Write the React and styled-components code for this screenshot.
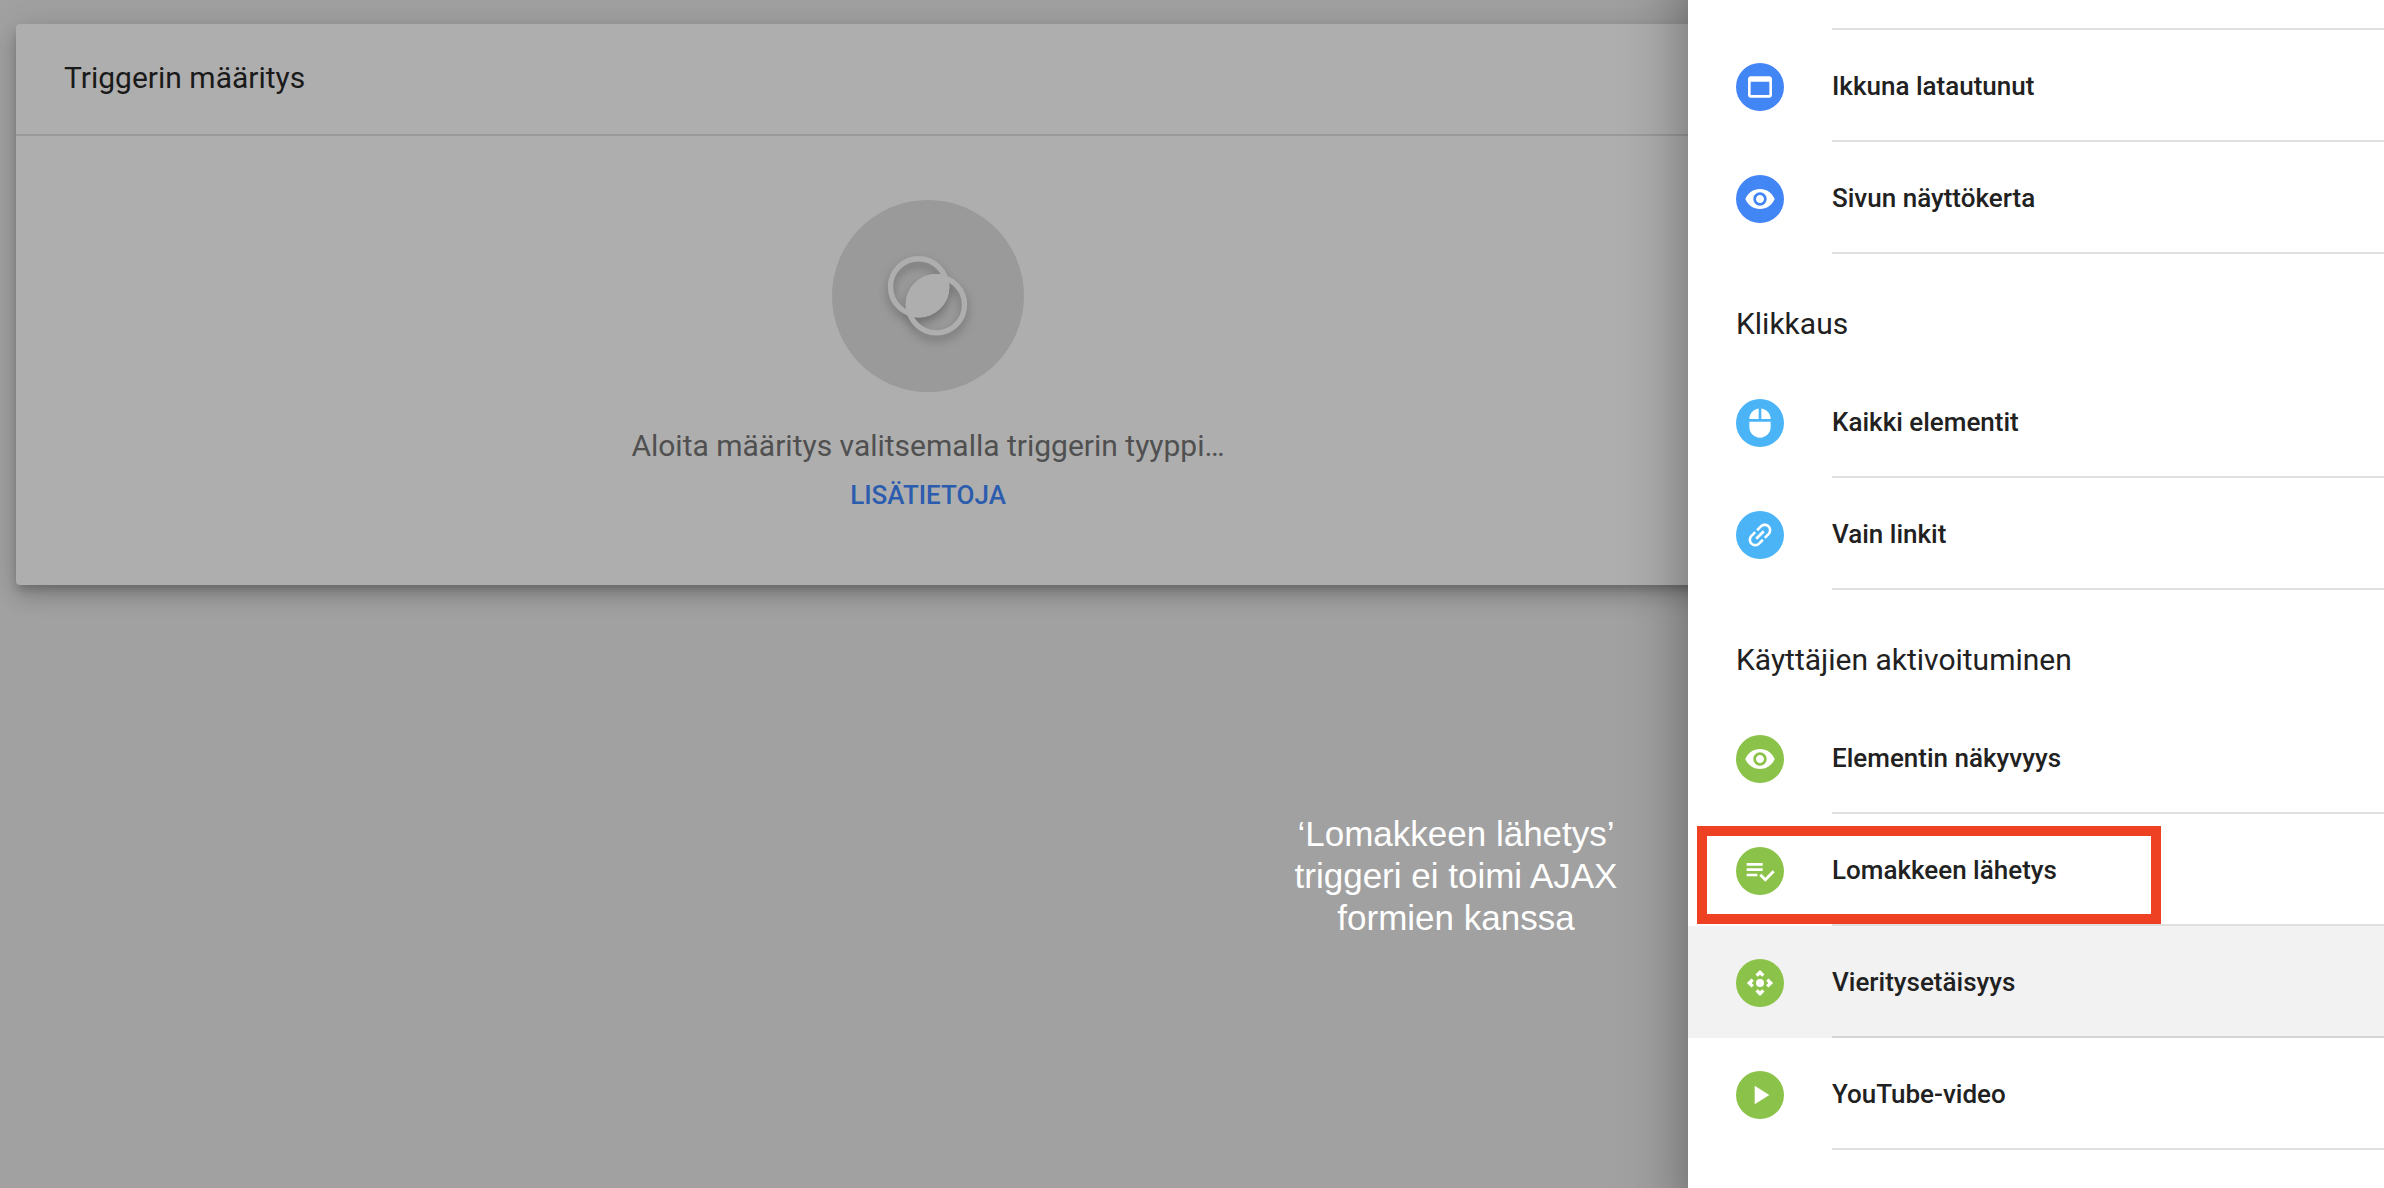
import React from "react";
import styled, { createGlobalStyle } from "styled-components";

const GlobalStyle = createGlobalStyle`
  *, *::before, *::after { box-sizing: border-box; }
  body {
    margin: 0;
    background: #a1a1a1;
    font-family: Roboto, "Noto Sans", sans-serif;
    color: #212121;
  }
`;

const Page = styled.div`
  position: relative;
  min-height: 100vh;
  padding: 24px 544px 0 16px;
  overflow: hidden;
`;

const Card = styled.main`
  background: #aeaeae;
  border-radius: 4px;
  box-shadow:
    0 12px 20px rgba(0, 0, 0, 0.14),
    0 2px 36px rgba(0, 0, 0, 0.12),
    0 6px 10px -2px rgba(0, 0, 0, 0.2);
`;

const CardHeader = styled.header`
  display: flex;
  align-items: center;
  height: 112px;
  padding: 0 48px 2px;
  border-bottom: 2px solid #9a9a9a;
`;

const CardTitle = styled.h1`
  margin: 0;
  font-size: 30px;
  font-weight: 400;
  line-height: 40px;
  color: #1a1a1a;
`;

const CardBody = styled.div`
  display: flex;
  flex-direction: column;
  align-items: center;
  padding: 64px 48px 70px;
`;

const Emblem = styled.div`
  display: flex;
  align-items: center;
  justify-content: center;
  width: 192px;
  height: 192px;
  margin-bottom: 32px;
  border-radius: 50%;
  background: #9a9a9a;
`;

const EmblemIcon = styled.svg`
  width: 96px;
  height: 96px;
  overflow: visible;
  filter: drop-shadow(0 5px 5px rgba(0, 0, 0, 0.28));
`;

const Prompt = styled.p`
  margin: 0 0 7px;
  font-size: 30px;
  line-height: 44px;
  color: #505050;
`;

const MoreLink = styled.a`
  font-size: 26px;
  font-weight: 500;
  line-height: 40px;
  color: #2c5cae;
  text-decoration: none;
  text-transform: uppercase;
`;

const Drawer = styled.aside`
  position: absolute;
  top: 0;
  right: 0;
  bottom: 0;
  width: 696px;
  padding-top: 28px;
  background: #fff;
  box-shadow: 40px 0 60px 40px rgba(0, 0, 0, 0.4);
`;

const Divider = styled.hr`
  height: 2px;
  margin: 0 0 0 144px;
  border: 0;
  background: rgba(0, 0, 0, 0.12);
`;

const GroupTitle = styled.h2`
  display: flex;
  align-items: center;
  height: 112px;
  margin: 0;
  padding: 28px 48px 0;
  font-size: 30px;
  font-weight: 400;
  line-height: 40px;
`;

const List = styled.ul`
  margin: 0;
  padding: 0;
  list-style: none;
`;

const Item = styled.li`
  position: relative;
  background: ${(p) => (p.$hovered ? "#f2f2f2" : "transparent")};
`;

const ItemButton = styled.button`
  display: flex;
  align-items: center;
  gap: 48px;
  width: 100%;
  height: 110px;
  padding: 4px 48px 0;
  border: 0;
  background: none;
  font: 500 26px/36px Roboto, "Noto Sans", sans-serif;
  color: #212121;
  text-align: left;
  cursor: pointer;
`;

const ItemLabel = styled.span`
  padding-bottom: 2px;
`;

const Badge = styled.span`
  display: flex;
  align-items: center;
  justify-content: center;
  width: 48px;
  height: 48px;
  border-radius: 50%;
  background: ${(p) => p.$color};
`;

const Glyph = styled.svg`
  width: 32px;
  height: 32px;
  fill: #fff;
`;

const Highlight = styled.div`
  position: absolute;
  top: 12px;
  left: 9px;
  width: 464px;
  height: 98px;
  border: 10px solid #ee4023;
  pointer-events: none;
`;

const Note = styled.p`
  position: absolute;
  top: 813px;
  right: 748px;
  width: 360px;
  margin: 0;
  font: 400 35px/42px "Liberation Sans", Arial, sans-serif;
  color: #fff;
  text-align: center;
`;

const icons = {
  window: (
    <path d="M19 4H5c-1.11 0-2 .9-2 2v12c0 1.1.89 2 2 2h14c1.1 0 2-.9 2-2V6c0-1.1-.89-2-2-2zm0 14H5V8h14v10z" />
  ),
  eye: (
    <path d="M12 4.5C7 4.5 2.73 7.61 1 12c1.73 4.39 6 7.5 11 7.5s9.27-3.11 11-7.5c-1.73-4.39-6-7.5-11-7.5zM12 17c-2.76 0-5-2.24-5-5s2.24-5 5-5 5 2.24 5 5-2.24 5-5 5zm0-8c-1.66 0-3 1.34-3 3s1.34 3 3 3 3-1.34 3-3-1.34-3-3-3z" />
  ),
  mouse: (
    <path d="M13 1.07V9h7c0-4.08-3.05-7.44-7-7.93zM4 15c0 4.42 3.58 8 8 8s8-3.58 8-8v-4H4v4zm7-13.93C7.05 1.56 4 4.92 4 9h7V1.07z" />
  ),
  link: (
    <path
      transform="rotate(-45 12 12)"
      d="M3.9 12c0-1.71 1.39-3.1 3.1-3.1h4V7H7c-2.76 0-5 2.24-5 5s2.24 5 5 5h4v-1.9H7c-1.71 0-3.1-1.39-3.1-3.1zM8 13h8v-2H8v2zm9-6h-4v1.9h4c1.71 0 3.1 1.39 3.1 3.1s-1.39 3.1-3.1 3.1h-4V17h4c2.76 0 5-2.24 5-5s-2.24-5-5-5z"
    />
  ),
  form: (
    <path d="M14 10H2v2h12v-2zm0-4H2v2h12V6zM2 16h8v-2H2v2zm19.5-4.5L23 13l-6.99 7-4.51-4.5L13 14l3.01 3 5.49-5.5z" />
  ),
  scroll: (
    <>
      {[0, 90, 180, 270].map((angle) => (
        <path
          key={angle}
          transform={`rotate(${angle} 12 12)`}
          d="M12 2.2l3.4 3.4-1.8 1.8L12 5.8l-1.6 1.6-1.8-1.8z"
        />
      ))}
      <circle cx="12" cy="12" r="3" />
    </>
  ),
  play: <path d="M8 5v14l11-7z" />,
};

const BLUE = "#4285f4";
const SKY = "#4ab4f6";
const GREEN = "#8bc34a";

const groups = [
  {
    color: BLUE,
    items: [
      { icon: "window", label: "Ikkuna latautunut" },
      { icon: "eye", label: "Sivun näyttökerta" },
    ],
  },
  {
    title: "Klikkaus",
    color: SKY,
    items: [
      { icon: "mouse", label: "Kaikki elementit" },
      { icon: "link", label: "Vain linkit" },
    ],
  },
  {
    title: "Käyttäjien aktivoituminen",
    color: GREEN,
    items: [
      { icon: "eye", label: "Elementin näkyvyys" },
      { icon: "form", label: "Lomakkeen lähetys", highlighted: true },
      { icon: "scroll", label: "Vieritysetäisyys", hovered: true },
      { icon: "play", label: "YouTube-video" },
    ],
  },
];

function TriggerItem({ icon, label, color, highlighted, hovered }) {
  return (
    <Item $hovered={hovered}>
      <ItemButton type="button">
        <Badge $color={color}>
          <Glyph viewBox="0 0 24 24" aria-hidden="true">
            {icons[icon]}
          </Glyph>
        </Badge>
        <ItemLabel>{label}</ItemLabel>
      </ItemButton>
      <Divider />
      {highlighted && <Highlight />}
    </Item>
  );
}

export default function App() {
  return (
    <>
      <GlobalStyle />
      <Page>
        <Card>
          <CardHeader>
            <CardTitle>Triggerin määritys</CardTitle>
          </CardHeader>
          <CardBody>
            <Emblem>
              <EmblemIcon viewBox="0 0 96 96" aria-hidden="true">
                <defs>
                  <clipPath id="upper-ring">
                    <circle cx="38.6" cy="38.8" r="30.8" />
                  </clipPath>
                </defs>
                <g fill="none" stroke="#aeaeae" strokeWidth="5.4">
                  <circle cx="38.6" cy="38.8" r="28.1" />
                  <circle cx="56.4" cy="56.8" r="28.1" />
                </g>
                <circle cx="56.4" cy="56.8" r="30.8" fill="#aeaeae" clipPath="url(#upper-ring)" />
              </EmblemIcon>
            </Emblem>
            <Prompt>Aloita määritys valitsemalla triggerin tyyppi…</Prompt>
            <MoreLink href="#lisatietoja">Lisätietoja</MoreLink>
          </CardBody>
        </Card>
        <Note>
          ‘Lomakkeen lähetys’
          <br />
          triggeri ei toimi AJAX
          <br />
          formien kanssa
        </Note>
        <Drawer>
          <Divider />
          {groups.map((group, index) => (
            <section key={index}>
              {group.title && <GroupTitle>{group.title}</GroupTitle>}
              <List>
                {group.items.map((item) => (
                  <TriggerItem key={item.label} color={group.color} {...item} />
                ))}
              </List>
            </section>
          ))}
        </Drawer>
      </Page>
    </>
  );
}
